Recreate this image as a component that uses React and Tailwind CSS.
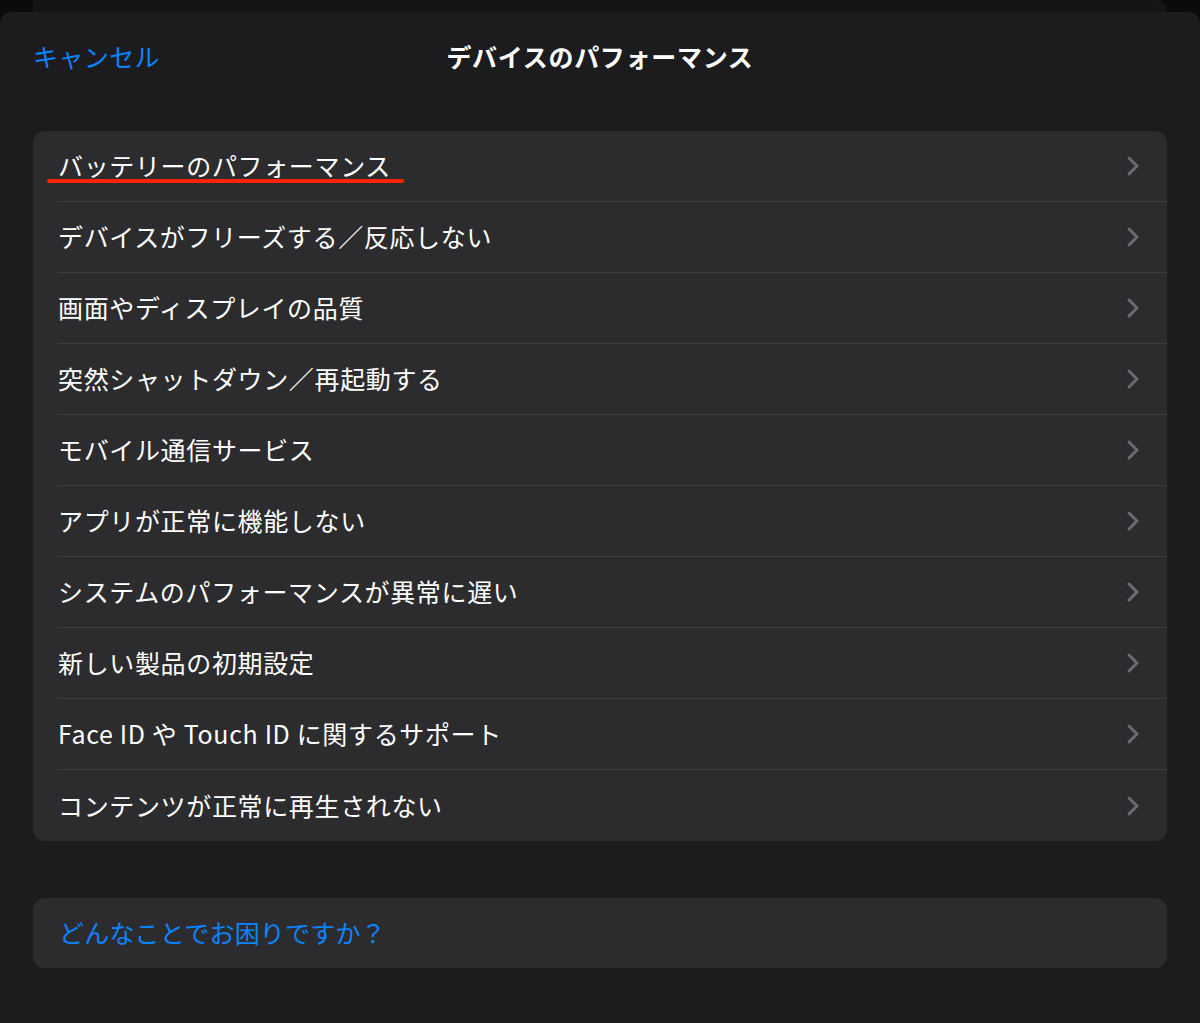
import React from 'react'

const items = [
  'バッテリーのパフォーマンス',
  'デバイスがフリーズする／反応しない',
  '画面やディスプレイの品質',
  '突然シャットダウン／再起動する',
  'モバイル通信サービス',
  'アプリが正常に機能しない',
  'システムのパフォーマンスが異常に遅い',
  '新しい製品の初期設定',
  'Face ID や Touch ID に関するサポート',
  'コンテンツが正常に再生されない',
]

function Chevron() {
  return (
    <svg width="14" height="22" viewBox="0 0 14 22" fill="none">
      <path d="M3 3 L11 11 L3 19" stroke="#6b6b70" strokeWidth="3" strokeLinecap="round" strokeLinejoin="round" />
    </svg>
  )
}

function App() {
  return (
    <div
      className="w-[1200px] h-[1023px] bg-[#0b0b0b] flex flex-col overflow-hidden"
      style={{ fontFamily: '"Noto Sans CJK JP", "Noto Sans", sans-serif' }}
    >
      {/* card behind the sheet */}
      <div className="h-[12px] mx-[33px] bg-[#151516] rounded-tr-[10px]"></div>

      <div className="flex-1 bg-[#1c1c1e] rounded-t-[12px] flex flex-col">
        <div className="h-[90px] relative flex items-center justify-center">
          <span className="absolute left-[33px] text-[25px] tracking-[0.4px] text-[#0a84ff]">キャンセル</span>
          <span className="text-[25px] font-bold tracking-[0.7px] text-white">デバイスのパフォーマンス</span>
        </div>

        <div className="mt-[29px] mx-[33px] bg-[#2c2c2e] rounded-[12px] flex flex-col">
          {items.map((item, i) => (
            <div key={item} className="h-[71px] pl-[25px] flex relative">
              <div
                className={
                  'flex-1 flex items-center justify-between pr-[27px] ' +
                  (i < items.length - 1 ? 'border-b border-[#3d3d40]' : '')
                }
              >
                <span className="text-[25px] tracking-[0.65px] text-white">{item}</span>
                <Chevron />
              </div>
              {i === 0 && (
                <span className="absolute left-[14px] top-[48px] w-[357px] h-[4px] rounded-full bg-[#ff2400]"></span>
              )}
            </div>
          ))}
        </div>

        <div className="mt-[57px] mx-[33px] h-[70px] bg-[#2c2c2e] rounded-[12px] flex items-center pl-[26px]">
          <span className="text-[25px] tracking-[0.2px] text-[#0a84ff]">どんなことでお困りですか？</span>
        </div>
      </div>
    </div>
  )
}

export default App
